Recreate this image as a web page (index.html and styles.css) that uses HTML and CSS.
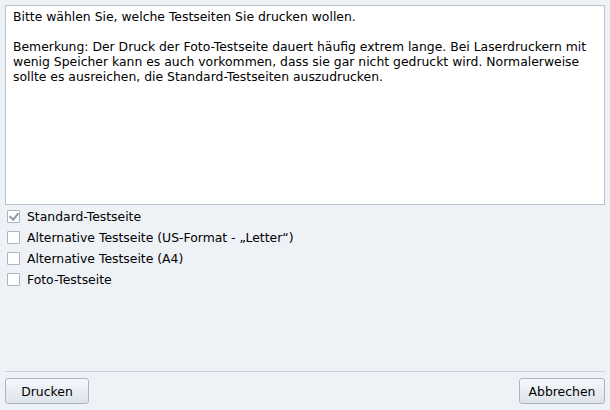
FILE: index.html
```html
<!DOCTYPE html>
<html>

<head>
    <meta charset="UTF-8">
    <title>Testseiten drucken</title>
    <link rel="stylesheet" href="styles.css">
</head>

<body>
    <div class="dialog">
        <div class="message">
            <p>Bitte wählen Sie, welche Testseiten Sie drucken wollen.</p>
            <p>Bemerkung: Der Druck der Foto-Testseite dauert häufig extrem lange. Bei Laserdruckern mit wenig Speicher kann es auch vorkommen, dass sie gar nicht gedruckt wird. Normalerweise sollte es ausreichen, die Standard-Testseiten auszudrucken.</p>
        </div>

        <div class="options">
            <label class="option"><span class="box checked"></span>Standard-Testseite</label>
            <label class="option"><span class="box"></span>Alternative Testseite (US-Format - „Letter“)</label>
            <label class="option"><span class="box"></span>Alternative Testseite (A4)</label>
            <label class="option"><span class="box"></span>Foto-Testseite</label>
        </div>

        <div class="buttons">
            <button class="button print">Drucken</button>
            <button class="button cancel">Abbrechen</button>
        </div>
    </div>
</body>

</html>
```

FILE: styles.css
```css
body {
    margin: 0;
    background-color: #eef1f6;
    font-family: "DejaVu Sans", sans-serif;
    font-size: 12.4px;
    color: #000;
}

.dialog {
    display: flex;
    flex-direction: column;
    height: 410px;
    padding: 5px 5px 6px 5px;
    box-sizing: border-box;
}

.message {
    height: 200px;
    box-sizing: border-box;
    background-color: #fff;
    border: 1px solid #b9c4d1;
    padding: 3px 7px;
    line-height: 15px;
}

.message p {
    margin: 0 0 15px 0;
}

.options {
    display: flex;
    flex-direction: column;
    gap: 6px;
    padding-top: 4px;
    padding-left: 2px;
}

.option {
    display: flex;
    align-items: center;
    gap: 7px;
    height: 15px;
}

.box {
    width: 11px;
    height: 11px;
    border: 1px solid #a9b5c4;
    background-color: #fff;
    border-radius: 1px;
    position: relative;
}

.box.checked::after {
    content: "";
    position: absolute;
    left: 3px;
    top: 0px;
    width: 4px;
    height: 7px;
    border-right: 2px solid #8b98aa;
    border-bottom: 2px solid #8b98aa;
    transform: rotate(40deg);
}

.buttons {
    margin-top: auto;
    border-top: 1px solid #c8d0da;
    padding-top: 6px;
    display: flex;
    justify-content: space-between;
}

.button {
    height: 26px;
    padding: 0;
    font-family: "DejaVu Sans", sans-serif;
    font-size: 12.4px;
    color: #000;
    background: linear-gradient(#f6f8fb, #dde3eb);
    border: 1px solid #a9b5c4;
    border-radius: 3px;
}

.button.print {
    width: 84px;
}

.button.cancel {
    width: 86px;
}
```
